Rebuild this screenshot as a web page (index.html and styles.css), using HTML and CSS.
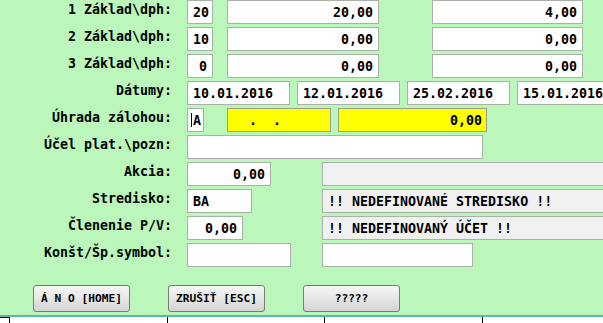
FILE: index.html
```html
<!DOCTYPE html>
<html>
  <head>
    <title>Úhrada zálohou</title>
    <link rel="stylesheet" href="styles.css">
  </head>
  <body>
    <div class="panel">
      <div class="form">
        <div class="row">
          <div class="lbl">1 Základ\dph:</div>
          <div class="fld num w-rate">20</div>
          <div class="fld num w-base">20,00</div>
          <div class="fld num w-tax">4,00</div>
        </div>
        <div class="row">
          <div class="lbl">2 Základ\dph:</div>
          <div class="fld num w-rate">10</div>
          <div class="fld num w-base">0,00</div>
          <div class="fld num w-tax">0,00</div>
        </div>
        <div class="row">
          <div class="lbl">3 Základ\dph:</div>
          <div class="fld num w-rate">0</div>
          <div class="fld num w-base">0,00</div>
          <div class="fld num w-tax">0,00</div>
        </div>
        <div class="row">
          <div class="lbl">Dátumy:</div>
          <div class="fld w-date">10.01.2016</div>
          <div class="fld w-date next">12.01.2016</div>
          <div class="fld w-date next">25.02.2016</div>
          <div class="fld w-date next">15.01.2016</div>
        </div>
        <div class="row">
          <div class="lbl">Úhrada zálohou:</div>
          <div class="fld w-flag"><span class="caret"></span>A</div>
          <div class="fld yellow w-ydate">  .  .    </div>
          <div class="fld yellow num w-yamt">0,00</div>
        </div>
        <div class="row">
          <div class="lbl">Účel plat.\pozn:</div>
          <div class="fld w-note"></div>
        </div>
        <div class="row">
          <div class="lbl">Akcia:</div>
          <div class="fld num w-akcia">0,00</div>
          <div class="fld gray w-info m-akcia"></div>
        </div>
        <div class="row">
          <div class="lbl">Stredisko:</div>
          <div class="fld w-stred">BA</div>
          <div class="fld gray w-info m-stred">!! NEDEFINOVANÉ STREDISKO !!</div>
        </div>
        <div class="row">
          <div class="lbl">Členenie P/V:</div>
          <div class="fld num w-clen">0,00</div>
          <div class="fld gray w-info m-clen">!! NEDEFINOVANÝ ÚČET !!</div>
        </div>
        <div class="row">
          <div class="lbl">Konšt/Šp.symbol:</div>
          <div class="fld w-konst"></div>
          <div class="fld w-spec"></div>
        </div>
      </div>
      <div class="buttons">
        <button class="btn">Á N O [HOME]</button>
        <button class="btn">ZRUŠIŤ [ESC]</button>
        <button class="btn">?????</button>
      </div>
    </div>
    <div class="strip">
      <div class="cell c1"></div>
      <div class="cell c2"></div>
      <div class="cell c3"></div>
      <div class="cell c4"></div>
      <div class="cell c5"></div>
    </div>
  </body>
</html>
```

FILE: styles.css
```css
body{
  margin:0;
  width:603px;
  height:323px;
  overflow:hidden;
  font-family:"DejaVu Sans Mono", "Liberation Mono", monospace;
  font-weight:bold;
  font-size:13.3px;
  color:#000;
  background:#fff;
}
.panel{
  background:#bbf7bb;
  height:315px;
  overflow:hidden;
}
.form{
  display:flex;
  flex-direction:column;
  gap:3px;
}
.row{
  display:flex;
  align-items:flex-start;
  height:24px;
}
.lbl{
  flex:none;
  width:172px;
  margin-right:15px;
  text-align:right;
  line-height:20px;
  white-space:nowrap;
}
.fld{
  flex:none;
  box-sizing:border-box;
  height:24px;
  line-height:23px;
  padding:0 5px;
  border:1px solid #a9b1a9;
  background:#fff;
  white-space:pre;
  overflow:hidden;
}
.num{ text-align:right; }
.yellow{ background:#ffff00; border-color:#9aa08a; }
.gray{ background:#f0f0f0; }

.w-rate{ width:26px; }
.w-base{ width:152px; margin-left:14px; }
.w-tax{ width:151px; margin-left:53px; }
.w-date{ width:103px; }
.next{ margin-left:7px; }
.w-flag{ width:17px; padding:0 0 0 3px; }
.caret{
  display:inline-block;
  width:1px;
  height:14px;
  background:#000;
  vertical-align:-2px;
  margin-right:1px;
}
.w-ydate{ width:104px; margin-left:23px; }
.w-yamt{ width:149px; margin-left:7px; padding-right:4px; }
.w-note{ width:296px; }
.w-akcia{ width:84px; }
.w-info{ width:300px; }
.m-akcia{ margin-left:51px; }
.w-stred{ width:65px; }
.m-stred{ margin-left:70px; }
.w-clen{ width:56px; }
.m-clen{ margin-left:79px; }
.w-konst{ width:104px; }
.w-spec{ width:151px; margin-left:31px; }

.buttons{
  display:flex;
  gap:38px;
  margin-top:18px;
  padding-left:33px;
}
.btn{
  width:97px;
  height:27px;
  padding:0;
  border:1px solid #7a7a7a;
  border-radius:3px;
  background:linear-gradient(#f6f6f6, #e6e6e6 50%, #d4d4d4);
  font-family:"DejaVu Sans Mono", "Liberation Mono", monospace;
  font-weight:bold;
  font-size:11.2px;
  color:#000;
}
.strip{
  display:flex;
  height:8px;
  border-top:2px solid #5ab3b5;
}
.cell{
  box-sizing:border-box;
  border-left:1px solid #000;
}
.c1{ width:9px; border-left:none; border-top:1px solid #000; }
.c2{ width:158px; }
.c3{ width:157px; }
.c4{ width:158px; }
.c5{ width:76px; }
```
